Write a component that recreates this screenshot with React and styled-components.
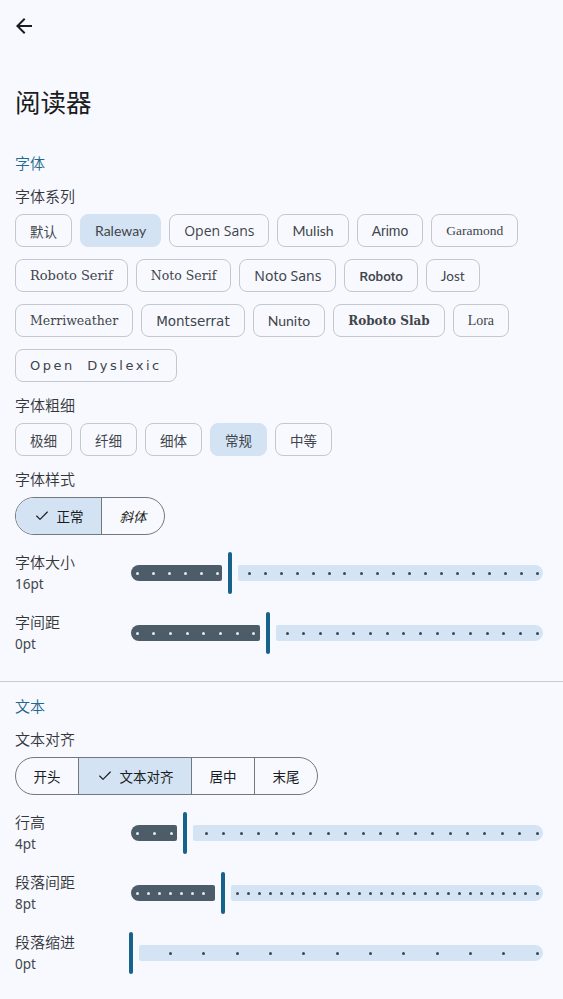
import React from 'react';
import styled, { createGlobalStyle } from 'styled-components';
import { Check } from 'lucide-react';

const GlobalStyle = createGlobalStyle`
  html, body {
    margin: 0;
    padding: 0;
    background: #f8f9fe;
  }
  body {
    font-family: Roboto, "Noto Sans CJK SC", sans-serif;
    color: #191c20;
  }
`;

const TRACK_WIDTH = 412;

const Page = styled.div`
  width: 563px;
  min-height: 999px;
  background: #f8f9fe;
`;

const TopBar = styled.div`
  height: 52px;
  display: flex;
  align-items: center;
  padding-left: 12px;
`;

const Title = styled.h1`
  margin: 35px 0 35px 15px;
  font-size: 25.5px;
  line-height: 32px;
  font-weight: 400;
  color: #191c20;
`;

const Section = styled.section`
  padding: 0 20px 0 15px;
`;

const SectionTitle = styled.div`
  font-size: 15px;
  line-height: 20px;
  font-weight: 350;
  color: #1f6a8d;
`;

const FieldLabel = styled.div`
  font-size: 15px;
  line-height: 20px;
  font-weight: 350;
  color: #33363b;
  margin-top: ${p => (p.$first ? '13px' : '14px')};
  margin-bottom: 7px;
`;

const ChipGroup = styled.div`
  display: flex;
  flex-wrap: wrap;
  gap: 12px 8px;
`;

const Chip = styled.div`
  height: 33px;
  box-sizing: border-box;
  padding: 0 14px;
  border-radius: 8px;
  border: 1px solid ${p => (p.$selected ? '#d3e3f4' : '#c3c7cf')};
  background: ${p => (p.$selected ? '#d3e3f4' : 'transparent')};
  display: inline-flex;
  align-items: center;
  white-space: nowrap;
  color: #40454c;
  font-family: ${p => p.$font || '"Noto Sans CJK SC", sans-serif'};
  font-size: ${p => p.$size || '13.5px'};
  font-weight: ${p => p.$weight || 400};
  letter-spacing: ${p => p.$spacing || 'normal'};
  word-spacing: ${p => p.$wordSpacing || 'normal'};
`;

const Segmented = styled.div`
  display: inline-flex;
  height: 38px;
  box-sizing: border-box;
  border: 1px solid #72787e;
  border-radius: 19px;
  overflow: hidden;
`;

const Segment = styled.div`
  display: flex;
  align-items: center;
  gap: 7px;
  padding: 0 17.5px;
  font-size: 13.5px;
  font-style: ${p => (p.$italic ? 'italic' : 'normal')};
  color: #191c20;
  background: ${p => (p.$selected ? '#d3e3f4' : 'transparent')};

  & + & {
    border-left: 1px solid #72787e;
  }
`;

const SliderList = styled.div`
  margin-top: 8px;
`;

const SliderRow = styled.div`
  height: 60px;
  display: flex;
  align-items: center;
`;

const SliderLabel = styled.div`
  flex: 0 0 116px;
  display: flex;
  flex-direction: column;
  gap: 1px;
`;

const SliderName = styled.div`
  font-size: 15px;
  line-height: 20px;
  font-weight: 350;
  color: #33363b;
`;

const SliderValue = styled.div`
  font-family: "Noto Sans", Roboto, sans-serif;
  font-size: 13.5px;
  line-height: 20px;
  color: #41474d;
`;

const SliderBox = styled.div`
  position: relative;
  flex: 1;
  height: 42px;
  display: flex;
  align-items: center;
`;

const ActiveTrack = styled.div`
  flex: none;
  height: 16px;
  background: #4c5c69;
  border-radius: 8px 2px 2px 8px;
`;

const Thumb = styled.div`
  flex: none;
  width: 4px;
  height: 42px;
  border-radius: 2px;
  background: #17628b;
  margin: 0 6px 0 ${p => (p.$atStart ? '-2px' : '6px')};
`;

const InactiveTrack = styled.div`
  flex: 1;
  height: 16px;
  background: #d4e4f4;
  border-radius: 2px 8px 8px 2px;
`;

const Tick = styled.span`
  position: absolute;
  top: 50%;
  width: 3px;
  height: 3px;
  margin: -1.5px 0 0 -1.5px;
  border-radius: 50%;
  background: ${p => (p.$active ? '#e4eaf0' : '#3c4852')};
`;

const Divider = styled.hr`
  border: none;
  border-top: 1px solid #c6cad1;
  margin: 18px 0 15px;
`;

const BackIcon = () => (
  <svg width="24" height="24" viewBox="0 0 24 24" fill="#191c20">
    <path d="M20 11H7.83l5.59-5.59L12 4l-8 8 8 8 1.41-1.41L7.83 13H20v-2z" />
  </svg>
);

const families = [
  { name: '默认' },
  { name: 'Raleway', font: 'Lato, sans-serif', size: '14px', selected: true },
  { name: 'Open Sans', font: '"Open Sans", sans-serif', size: '14px' },
  { name: 'Mulish', font: 'Lato, sans-serif', size: '14px' },
  { name: 'Arimo', font: '"Liberation Sans", sans-serif', size: '14px' },
  { name: 'Garamond', font: '"Liberation Serif", serif', size: '13.5px' },
  { name: 'Roboto Serif', font: '"DejaVu Serif", serif', size: '13px' },
  { name: 'Noto Serif', font: '"DejaVu Serif", serif', size: '12.5px' },
  { name: 'Noto Sans', font: '"Noto Sans", sans-serif', size: '14px' },
  { name: 'Roboto', font: 'Roboto, sans-serif', size: '13.5px', weight: 500 },
  { name: 'Jost', font: 'Lato, sans-serif', size: '13.5px' },
  { name: 'Merriweather', font: '"DejaVu Serif", serif', size: '12.5px' },
  { name: 'Montserrat', font: '"DejaVu Sans", sans-serif', size: '13.5px' },
  { name: 'Nunito', font: 'Lato, sans-serif', size: '14px' },
  { name: 'Roboto Slab', font: '"DejaVu Serif", serif', size: '12px', weight: 600 },
  { name: 'Lora', font: '"Liberation Serif", serif', size: '14px' },
  {
    name: 'Open Dyslexic',
    font: '"DejaVu Sans", sans-serif',
    size: '13px',
    spacing: '2.5px',
    wordSpacing: '6px',
  },
];

const weights = ['极细', '纤细', '细体', '常规', '中等'];

const fontSliders = [
  { name: '字体大小', value: '16pt', steps: 25, index: 6 },
  { name: '字间距', value: '0pt', steps: 24, index: 8 },
];

const textSliders = [
  { name: '行高', value: '4pt', steps: 23, index: 3 },
  { name: '段落间距', value: '8pt', steps: 36, index: 8 },
  { name: '段落缩进', value: '0pt', steps: 12, index: 0 },
];

const StepSlider = ({ steps, index }) => {
  const f = index / steps;
  const thumbX = f * TRACK_WIDTH;
  const ticks = [];
  for (let i = 0; i <= steps; i++) {
    const x = 6 + ((TRACK_WIDTH - 12) * i) / steps;
    if (Math.abs(x - thumbX) < 10) continue;
    ticks.push(
      <Tick
        key={i}
        $active={x < thumbX}
        style={{ left: `calc(6px + (100% - 12px) * ${i / steps})` }}
      />
    );
  }
  return (
    <SliderBox>
      {index > 0 && <ActiveTrack style={{ width: `calc(${f * 100}% - 8px)` }} />}
      <Thumb $atStart={index === 0} />
      <InactiveTrack />
      {ticks}
    </SliderBox>
  );
};

const SliderField = ({ item }) => (
  <SliderRow>
    <SliderLabel>
      <SliderName>{item.name}</SliderName>
      <SliderValue>{item.value}</SliderValue>
    </SliderLabel>
    <StepSlider steps={item.steps} index={item.index} />
  </SliderRow>
);

export default function App() {
  return (
    <Page>
      <GlobalStyle />
      <TopBar>
        <BackIcon />
      </TopBar>
      <Title>阅读器</Title>

      <Section>
        <SectionTitle>字体</SectionTitle>
        <FieldLabel $first>字体系列</FieldLabel>
        <ChipGroup>
          {families.map(f => (
            <Chip
              key={f.name}
              $font={f.font}
              $size={f.size}
              $weight={f.weight}
              $spacing={f.spacing}
              $wordSpacing={f.wordSpacing}
              $selected={f.selected}
            >
              {f.name}
            </Chip>
          ))}
        </ChipGroup>

        <FieldLabel>字体粗细</FieldLabel>
        <ChipGroup>
          {weights.map(w => (
            <Chip key={w} $selected={w === '常规'}>
              {w}
            </Chip>
          ))}
        </ChipGroup>

        <FieldLabel>字体样式</FieldLabel>
        <Segmented>
          <Segment $selected>
            <Check size={16} strokeWidth={1.75} />
            正常
          </Segment>
          <Segment $italic>斜体</Segment>
        </Segmented>

        <SliderList>
          {fontSliders.map(s => (
            <SliderField key={s.name} item={s} />
          ))}
        </SliderList>
      </Section>

      <Divider />

      <Section>
        <SectionTitle>文本</SectionTitle>
        <FieldLabel $first>文本对齐</FieldLabel>
        <Segmented>
          <Segment>开头</Segment>
          <Segment $selected>
            <Check size={16} strokeWidth={1.75} />
            文本对齐
          </Segment>
          <Segment>居中</Segment>
          <Segment>末尾</Segment>
        </Segmented>

        <SliderList>
          {textSliders.map(s => (
            <SliderField key={s.name} item={s} />
          ))}
        </SliderList>
      </Section>
    </Page>
  );
}
